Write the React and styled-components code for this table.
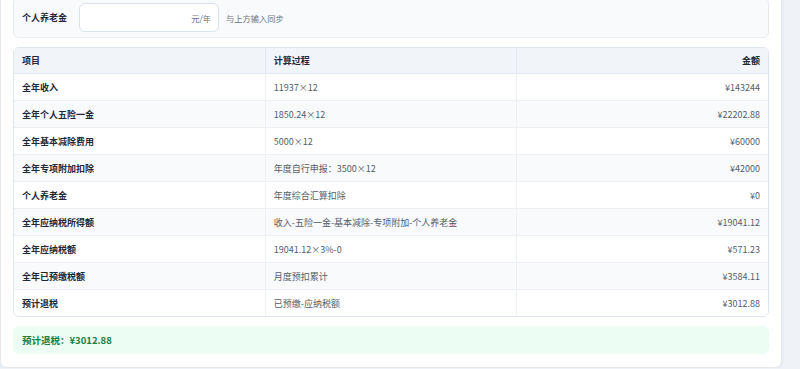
import React from 'react'
import styled, { createGlobalStyle } from 'styled-components'

const GlobalStyle = createGlobalStyle`
  html, body {
    margin: 0;
    padding: 0;
    background: #eff2f7;
    overflow: hidden;
  }
  body {
    font-family: "Noto Sans CJK SC", "Noto Sans", sans-serif;
  }
`

const Page = styled.div`
  margin-top: -16px;
  width: 782px;
`

const Card = styled.div`
  background: #fff;
  border: 1px solid #e5e8ee;
  border-radius: 7px;
  padding: 12px 12px 13px;
  box-shadow: 0 1px 4px rgba(30, 41, 59, 0.06);
  display: flex;
  flex-direction: column;
  gap: 9px;
`

const SettingsPanel = styled.div`
  background: #f8fafc;
  border: 1px solid #e6ebf1;
  border-radius: 6px;
  padding: 5px 8px;
  display: flex;
  align-items: center;
`

const FieldLabel = styled.span`
  font-size: 9px;
  font-weight: 700;
  color: #1f2937;
  width: 57px;
`

const InputBox = styled.div`
  width: 140px;
  height: 29px;
  box-sizing: border-box;
  background: #fff;
  border: 1px solid #d9e1ea;
  border-radius: 6px;
  display: flex;
  align-items: center;
  justify-content: flex-end;
  padding: 0 7px;
`

const Suffix = styled.span`
  font-size: 8.25px;
  color: #6b7280;
`

const Hint = styled.span`
  margin-left: 7px;
  font-size: 8.25px;
  color: #6b7280;
`

const TableWrap = styled.div`
  border: 1px solid #dfe5ed;
  border-radius: 6px;
  overflow: hidden;
`

const Table = styled.table`
  width: 100%;
  border-collapse: collapse;
  table-layout: fixed;
  font-size: 9px;
`

const HeadCell = styled.th`
  height: 25px;
  padding: 0 8px;
  background: #f1f4f8;
  color: #1f2937;
  font-weight: 700;
  text-align: ${(p) => (p.$right ? 'right' : 'left')};
  border-right: 1px solid #e3e8ef;
  border-bottom: 1px solid #e3e8ef;
  &:last-child {
    border-right: none;
  }
`

const Row = styled.tr`
  background: ${(p) => (p.$striped ? '#f9fafc' : '#fff')};
  &:last-child td {
    border-bottom: none;
  }
`

const Cell = styled.td`
  height: 26px;
  padding: 0 8px;
  color: ${(p) => (p.$bold ? '#1f2937' : '#545d6b')};
  font-weight: ${(p) => (p.$bold ? 700 : 400)};
  text-align: ${(p) => (p.$right ? 'right' : 'left')};
  border-right: 1px solid #edf0f5;
  border-bottom: 1px solid #edf0f5;
  white-space: nowrap;
  &:last-child {
    border-right: none;
  }
`

const ResultBox = styled.div`
  background: #ecfdf3;
  border-radius: 6px;
  height: 28px;
  padding: 0 9px;
  display: flex;
  align-items: center;
  font-size: 9.5px;
  font-weight: 700;
  color: #16803f;
`

const rows = [
  ['全年收入', '11937×12', '¥143244'],
  ['全年个人五险一金', '1850.24×12', '¥22202.88'],
  ['全年基本减除费用', '5000×12', '¥60000'],
  ['全年专项附加扣除', '年度自行申报：3500×12', '¥42000'],
  ['个人养老金', '年度综合汇算扣除', '¥0'],
  ['全年应纳税所得额', '收入-五险一金-基本减除-专项附加-个人养老金', '¥19041.12'],
  ['全年应纳税额', '19041.12×3%-0', '¥571.23'],
  ['全年已预缴税额', '月度预扣累计', '¥3584.11'],
  ['预计退税', '已预缴-应纳税额', '¥3012.88'],
]

const App = () => {
  return (
    <Page>
      <GlobalStyle />
      <Card>
        <SettingsPanel>
          <FieldLabel>个人养老金</FieldLabel>
          <InputBox>
            <Suffix>元/年</Suffix>
          </InputBox>
          <Hint>与上方输入同步</Hint>
        </SettingsPanel>
        <TableWrap>
          <Table>
            <thead>
              <tr>
                <HeadCell>项目</HeadCell>
                <HeadCell>计算过程</HeadCell>
                <HeadCell $right>金额</HeadCell>
              </tr>
            </thead>
            <tbody>
              {rows.map(([item, process, amount], i) => (
                <Row key={item} $striped={i % 2 === 1}>
                  <Cell $bold>{item}</Cell>
                  <Cell>{process}</Cell>
                  <Cell $right>{amount}</Cell>
                </Row>
              ))}
            </tbody>
          </Table>
        </TableWrap>
        <ResultBox>预计退税：¥3012.88</ResultBox>
      </Card>
    </Page>
  )
}

export default App
